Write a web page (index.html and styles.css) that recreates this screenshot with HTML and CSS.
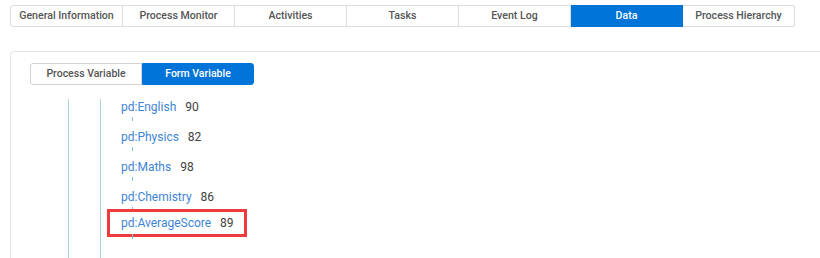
FILE: index.html
```html
<!DOCTYPE html>
<html>
<head>
<meta charset="utf-8">
<link rel="stylesheet" href="styles.css">
</head>
<body>
<div class="tabs">
  <div class="tab">General Information</div>
  <div class="tab">Process Monitor</div>
  <div class="tab">Activities</div>
  <div class="tab">Tasks</div>
  <div class="tab">Event Log</div>
  <div class="tab active">Data</div>
  <div class="tab">Process Hierarchy</div>
</div>
<div class="panel">
  <div class="subtabs">
    <div class="subtab">Process Variable</div>
    <div class="subtab active">Form Variable</div>
  </div>
  <div class="tree">
    <div class="branch">
      <div class="node"><span class="key">pd:English</span><span class="val">90</span></div>
      <div class="node"><span class="key">pd:Physics</span><span class="val">82</span></div>
      <div class="node"><span class="key">pd:Maths</span><span class="val">98</span></div>
      <div class="node"><span class="key">pd:Chemistry</span><span class="val">86</span></div>
      <div class="node highlight"><span class="key">pd:AverageScore</span><span class="val">89</span></div>
    </div>
  </div>
</div>
</body>
</html>
```

FILE: styles.css
```css
html, body {
  margin: 0;
  padding: 0;
  background: #ffffff;
  font-family: Roboto, "Liberation Sans", sans-serif;
  font-size: 12px;
  overflow: hidden;
  height: 258px;
}

.tabs {
  display: flex;
  margin: 5px 0 0 10px;
}

.tab {
  width: 111px;
  height: 20px;
  line-height: 20px;
  border: 1px solid #dcdcdc;
  border-left: none;
  text-align: center;
  color: #555555;
  font-weight: 500;
  font-size: 10.6px;
}

.tab:first-child {
  border-left: 1px solid #dcdcdc;
  border-radius: 3px 0 0 3px;
}

.tab:last-child {
  border-radius: 0 3px 3px 0;
}

.tab.active {
  background: #0074d9;
  border-color: #0074d9;
  color: #ffffff;
}

.panel {
  margin: 24px 0 0 10px;
  width: 830px;
  height: 207px;
  overflow: hidden;
  border-top: 1px solid #e3e3e3;
  border-left: 1px solid #e3e3e3;
  border-top-left-radius: 4px;
  padding: 11px 0 0 19px;
  box-sizing: border-box;
}

.subtabs {
  display: flex;
}

.subtab {
  width: 110px;
  height: 20px;
  line-height: 20px;
  text-align: center;
  border: 1px solid #d4d4d4;
  color: #555555;
  font-weight: 500;
  font-size: 10.5px;
  border-radius: 3px 0 0 3px;
}

.subtab.active {
  background: #0074d9;
  border-color: #0074d9;
  color: #ffffff;
  border-radius: 0 3px 3px 0;
}

.tree {
  margin: 14px 0 0 38px;
  border-left: 1px solid #a9d4e4;
  padding-left: 31px;
  height: 180px;
}

.branch {
  border-left: 1px solid #a9d4e4;
  padding: 1px 0 0 20px;
  height: 100%;
  box-sizing: border-box;
}

.node {
  position: relative;
  height: 30px;
  line-height: 14px;
  display: flex;
  gap: 9px;
  font-size: 12px;
}

.node::after {
  content: "";
  position: absolute;
  left: 11px;
  top: 17px;
  width: 1px;
  height: 4px;
  background: #7fc0dc;
}

.key {
  color: #3d84d6;
}

.val {
  color: #404040;
}

.node.highlight {
  margin: -11px 0 0 -14px;
  width: 140px;
  border: 3px solid #ef3b3b;
  padding: 4px 0 4px 11px;
  box-sizing: border-box;
  height: 28px;
}

.node.highlight::after {
  left: 22px;
  top: 22px;
  height: 5px;
}
```
